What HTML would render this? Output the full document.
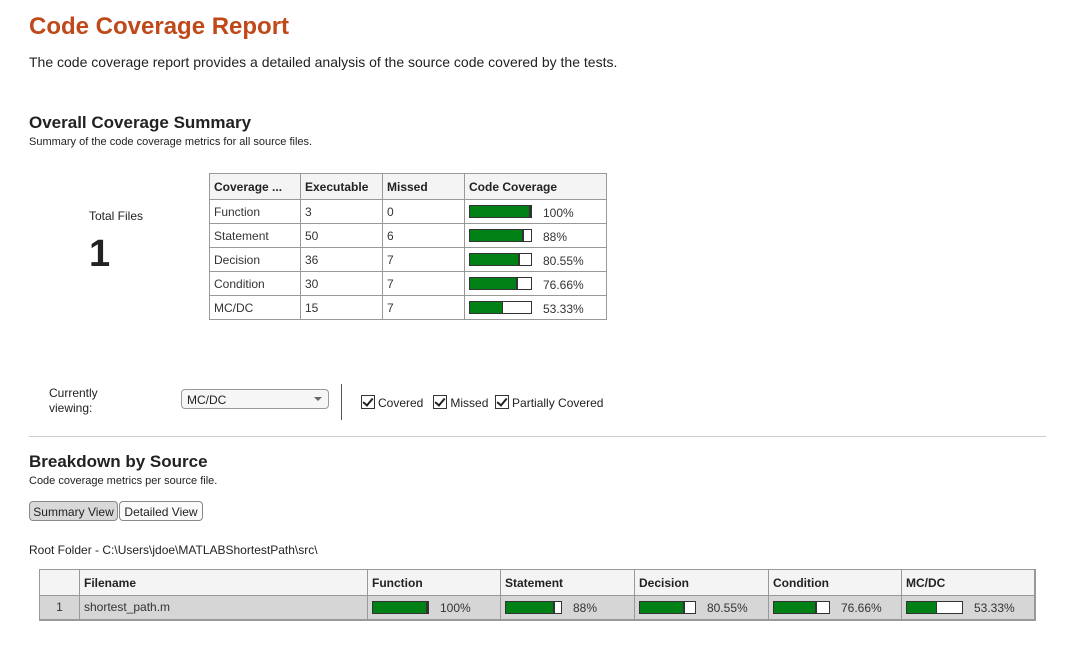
<!DOCTYPE html>
<html><head><meta charset="utf-8"><style>
body{margin:0;width:1073px;height:659px;background:#fff;font-family:"Liberation Sans",Arial,sans-serif;color:#222;position:relative;overflow:hidden}
.a{position:absolute;white-space:nowrap}
table{border-collapse:collapse;position:absolute;font-size:12px;color:#333}
td,th{border:1px solid #999;padding:0 4px;text-align:left;vertical-align:middle}
th{background:#f4f4f4;font-weight:bold;color:#222}
.f{display:flex;align-items:center;height:22px}
.bar{display:inline-block;border:1px solid #333;background:#fff;height:11px;position:relative;flex:none}
.bar i{position:absolute;left:0;top:0;bottom:0;background:#008015;border-right:2px solid #333}
.p{margin-left:11px;padding-top:2px}
.cb{display:inline-block;width:12px;height:12px;border:1px solid #333;vertical-align:-2px;margin-right:3px;position:relative;background:#fff}
.cb:after{content:"";position:absolute;left:3px;top:0px;width:4px;height:8px;border:solid #222;border-width:0 2px 2px 0;transform:rotate(40deg)}
</style></head><body>
<div class="a" style="left:29px;top:13px;font-size:24px;font-weight:bold;color:#c0491a">Code Coverage Report</div>
<div class="a" style="left:29px;top:54px;font-size:14px">The code coverage report provides a detailed analysis of the source code covered by the tests.</div>
<div class="a" style="left:29px;top:113px;font-size:17px;font-weight:bold">Overall Coverage Summary</div>
<div class="a" style="left:29px;top:136px;font-size:11px">Summary of the code coverage metrics for all source files.</div>
<div class="a" style="left:89px;top:209px;font-size:12px">Total Files</div>
<div class="a" style="left:89px;top:233px;font-size:38px;font-weight:bold">1</div>
<table style="left:209px;top:173px;width:398px">
<tr style="height:26px"><th style="width:82px">Coverage ...</th><th style="width:73px">Executable</th><th style="width:73px">Missed</th><th>Code Coverage</th></tr>
<tr style="height:24px"><td>Function</td><td>3</td><td>0</td><td><div class="f"><span class="bar" style="width:61px"><i style="width:59px"></i></span><span class="p">100%</span></div></td></tr>
<tr style="height:24px"><td>Statement</td><td>50</td><td>6</td><td><div class="f"><span class="bar" style="width:61px"><i style="width:52px"></i></span><span class="p">88%</span></div></td></tr>
<tr style="height:24px"><td>Decision</td><td>36</td><td>7</td><td><div class="f"><span class="bar" style="width:61px"><i style="width:48px"></i></span><span class="p">80.55%</span></div></td></tr>
<tr style="height:24px"><td>Condition</td><td>30</td><td>7</td><td><div class="f"><span class="bar" style="width:61px"><i style="width:46px"></i></span><span class="p">76.66%</span></div></td></tr>
<tr style="height:24px"><td>MC/DC</td><td>15</td><td>7</td><td><div class="f"><span class="bar" style="width:61px"><i style="width:32px;border-right-width:1px"></i></span><span class="p">53.33%</span></div></td></tr>
</table>
<div class="a" style="left:49px;top:386px;font-size:12px;line-height:15px">Currently<br>viewing:</div>
<div class="a" style="left:181px;top:389px;width:148px;height:20px;border:1px solid #999;border-radius:4px;background:#f6f6f6;font-size:12px;line-height:20px;box-sizing:border-box;padding-left:5px">MC/DC<span style="position:absolute;right:6px;top:7px;border:4px solid transparent;border-top:4px solid #666"></span></div>
<div class="a" style="left:341px;top:384px;width:1px;height:36px;background:#555"></div>
<div class="a" style="left:361px;top:395px;font-size:12px"><span class="cb"></span>Covered&nbsp;&nbsp;&nbsp;<span class="cb"></span>Missed&nbsp;&nbsp;<span class="cb"></span>Partially Covered</div>
<div class="a" style="left:29px;top:436px;width:1017px;height:1px;background:#ccc"></div>
<div class="a" style="left:29px;top:452px;font-size:17px;font-weight:bold">Breakdown by Source</div>
<div class="a" style="left:29px;top:475px;font-size:11px">Code coverage metrics per source file.</div>
<div class="a" style="left:29px;top:501px;height:20px;width:89px;border:1px solid #888;border-radius:4px;background:#d9d9d9;font-size:12px;line-height:20px;text-align:center;box-sizing:border-box">Summary View</div>
<div class="a" style="left:119px;top:501px;height:20px;width:84px;border:1px solid #888;border-radius:4px;background:#fafafa;font-size:12px;line-height:20px;text-align:center;box-sizing:border-box">Detailed View</div>
<div class="a" style="left:29px;top:543px;font-size:12px">Root Folder - C:\Users\jdoe\MATLABShortestPath\src\</div>
<table style="left:39px;top:569px;width:997px;border:2px solid #999;border-left:1px solid #999;border-top:1px solid #999">
<tr style="height:26px"><th style="width:31px"></th><th style="width:279px">Filename</th><th style="width:124px">Function</th><th style="width:125px">Statement</th><th style="width:125px">Decision</th><th style="width:124px">Condition</th><th>MC/DC</th></tr>
<tr style="height:24px;background:#d6d6d6"><td style="text-align:center">1</td><td>shortest_path.m</td>
<td><div class="f"><span class="bar" style="width:55px"><i style="width:53px"></i></span><span class="p">100%</span></div></td>
<td><div class="f"><span class="bar" style="width:55px"><i style="width:47px"></i></span><span class="p">88%</span></div></td>
<td><div class="f"><span class="bar" style="width:55px"><i style="width:43px"></i></span><span class="p">80.55%</span></div></td>
<td><div class="f"><span class="bar" style="width:55px"><i style="width:41px"></i></span><span class="p">76.66%</span></div></td>
<td><div class="f"><span class="bar" style="width:55px"><i style="width:29px;border-right-width:1px"></i></span><span class="p">53.33%</span></div></td></tr>
</table>
</body></html>
